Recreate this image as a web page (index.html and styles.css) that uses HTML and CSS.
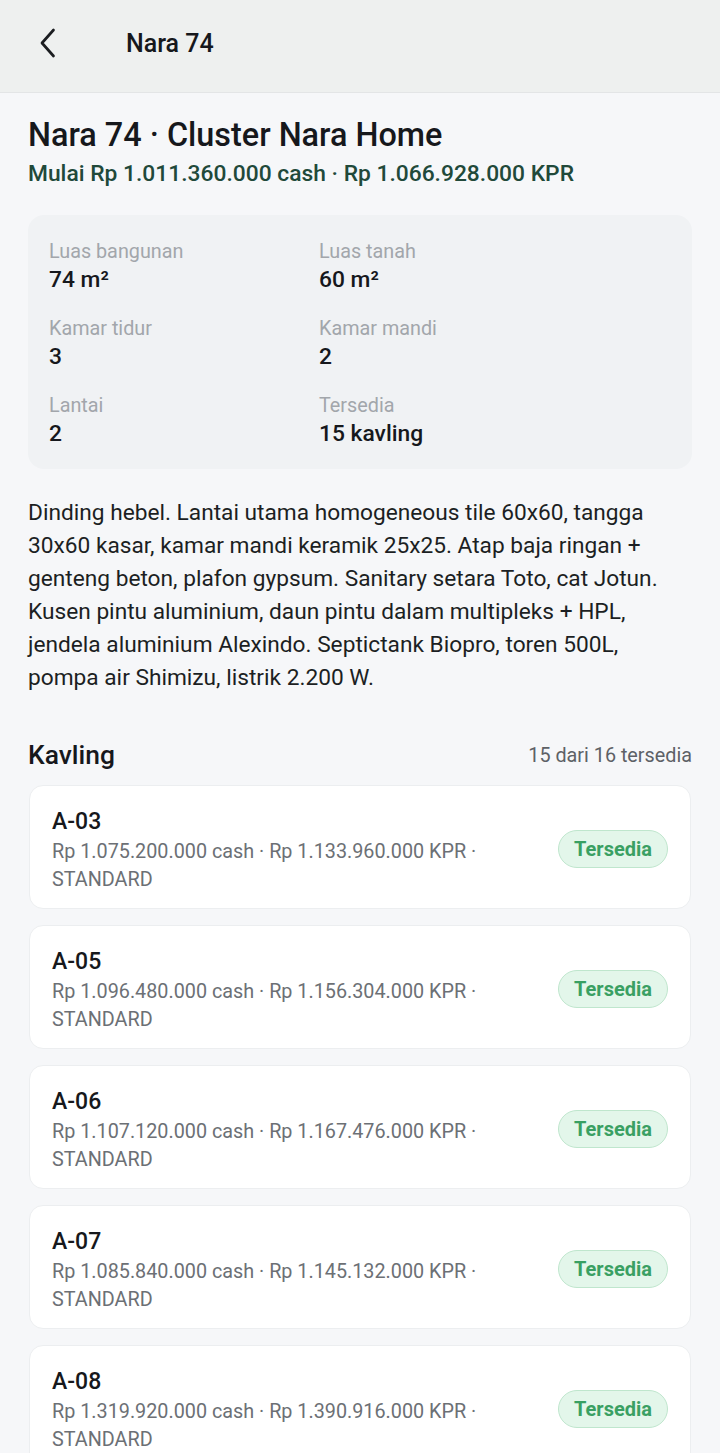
FILE: index.html
```html
<!DOCTYPE html>
<html lang="id">
<head>
    <meta charset="UTF-8">
    <meta name="viewport" content="width=device-width, initial-scale=1.0">
    <title>Nara 74</title>
    <link rel="stylesheet" href="styles.css">
</head>
<body>
    <header class="topbar">
        <button class="back" aria-label="Kembali">
            <svg width="24" height="30" viewBox="0 0 24 30"><path d="M16.5 2 L5 15 L16.5 28" fill="none" stroke="#1b1d20" stroke-width="2.7" stroke-linecap="round" stroke-linejoin="round"/></svg>
        </button>
        <div class="topbar-title">Nara 74</div>
    </header>

    <main class="container">
        <h1 class="title">Nara 74 · Cluster Nara Home</h1>
        <div class="price">Mulai Rp 1.011.360.000 cash · Rp 1.066.928.000 KPR</div>

        <div class="specs">
            <div class="spec"><div class="spec-label">Luas bangunan</div><div class="spec-value">74 m²</div></div>
            <div class="spec"><div class="spec-label">Luas tanah</div><div class="spec-value">60 m²</div></div>
            <div class="spec"><div class="spec-label">Kamar tidur</div><div class="spec-value">3</div></div>
            <div class="spec"><div class="spec-label">Kamar mandi</div><div class="spec-value">2</div></div>
            <div class="spec"><div class="spec-label">Lantai</div><div class="spec-value">2</div></div>
            <div class="spec"><div class="spec-label">Tersedia</div><div class="spec-value">15 kavling</div></div>
        </div>

        <p class="desc">Dinding hebel. Lantai utama homogeneous tile 60x60, tangga 30x60 kasar, kamar mandi keramik 25x25. Atap baja ringan + genteng beton, plafon gypsum. Sanitary setara Toto, cat Jotun. Kusen pintu aluminium, daun pintu dalam multipleks + HPL, jendela aluminium Alexindo. Septictank Biopro, toren 500L, pompa air Shimizu, listrik 2.200 W.</p>

        <div class="section-head">
            <h2>Kavling</h2>
            <span class="count">15 dari 16 tersedia</span>
        </div>

        <div class="lots">
            <div class="lot">
                <div class="lot-info">
                    <div class="lot-name">A-03</div>
                    <div class="lot-meta">Rp 1.075.200.000 cash · Rp 1.133.960.000 KPR · STANDARD</div>
                </div>
                <span class="badge">Tersedia</span>
            </div>
            <div class="lot">
                <div class="lot-info">
                    <div class="lot-name">A-05</div>
                    <div class="lot-meta">Rp 1.096.480.000 cash · Rp 1.156.304.000 KPR · STANDARD</div>
                </div>
                <span class="badge">Tersedia</span>
            </div>
            <div class="lot">
                <div class="lot-info">
                    <div class="lot-name">A-06</div>
                    <div class="lot-meta">Rp 1.107.120.000 cash · Rp 1.167.476.000 KPR · STANDARD</div>
                </div>
                <span class="badge">Tersedia</span>
            </div>
            <div class="lot">
                <div class="lot-info">
                    <div class="lot-name">A-07</div>
                    <div class="lot-meta">Rp 1.085.840.000 cash · Rp 1.145.132.000 KPR · STANDARD</div>
                </div>
                <span class="badge">Tersedia</span>
            </div>
            <div class="lot">
                <div class="lot-info">
                    <div class="lot-name">A-08</div>
                    <div class="lot-meta">Rp 1.319.920.000 cash · Rp 1.390.916.000 KPR · STANDARD</div>
                </div>
                <span class="badge">Tersedia</span>
            </div>
        </div>
    </main>
</body>
</html>
```

FILE: styles.css
```css
body {
    font-family: Roboto, "Noto Sans", sans-serif;
    background-color: #f6f7f9;
    color: #16181c;
    margin: 0;
    padding: 0;
}
.topbar {
    height: 92px;
    background: #eef0ef;
    border-bottom: 1px solid #e3e5e6;
    display: flex;
    align-items: center;
    padding: 0 0 0 37px;
}
.back {
    background: none;
    border: 0;
    padding: 0;
    width: 89px;
    display: flex;
    align-items: center;
    margin-top: -6px;
}
.topbar-title {
    font-size: 25px;
    font-weight: 500;
    color: #16181c;
    margin-top: -6px;
}
.container {
    padding: 21px 28px 0;
}
.title {
    font-size: 32.4px;
    font-weight: 500;
    margin: 0;
    line-height: 42px;
}
.price {
    font-size: 22.8px;
    font-weight: 500;
    color: #21493a;
    line-height: 34px;
    margin-top: 1px;
}
.specs {
    margin-top: 24px;
    background: #f0f2f4;
    border-radius: 16px;
    padding: 24px 21px 20px;
    display: grid;
    grid-template-columns: 270px 1fr;
    row-gap: 21px;
}
.spec-label {
    font-size: 19.8px;
    color: #a2a6ab;
    line-height: 26px;
}
.spec-value {
    font-size: 22.8px;
    font-weight: 500;
    color: #16181c;
    line-height: 30px;
}
.desc {
    font-size: 22.7px;
    line-height: 33px;
    color: #1c1f23;
    margin: 27px 0 0;
}
.section-head {
    display: flex;
    justify-content: space-between;
    align-items: center;
    margin-top: 45px;
}
.section-head h2 {
    margin: 0;
    font-size: 26.4px;
    font-weight: 500;
    line-height: 32px;
}
.count {
    font-size: 19.8px;
    color: #5d6166;
}
.lots {
    margin-top: 14px;
    display: flex;
    flex-direction: column;
    gap: 16px;
}
.lot {
    background: #fff;
    border: 1px solid #eceef0;
    border-radius: 14px;
    margin: 0 1px;
    padding: 20px 22px 14px;
    display: flex;
    align-items: center;
    justify-content: space-between;
}
.lot-name {
    font-size: 23px;
    font-weight: 500;
    line-height: 32px;
}
.lot-meta {
    font-size: 19.8px;
    color: #6c7075;
    line-height: 28px;
    max-width: 470px;
}
.badge {
    font-size: 20px;
    font-weight: 700;
    line-height: 24px;
    color: #3aa063;
    background: #e3f6ea;
    border: 1.5px solid #bfe6cd;
    border-radius: 20px;
    padding: 6px 15px;
    margin-top: -3px;
}
```
